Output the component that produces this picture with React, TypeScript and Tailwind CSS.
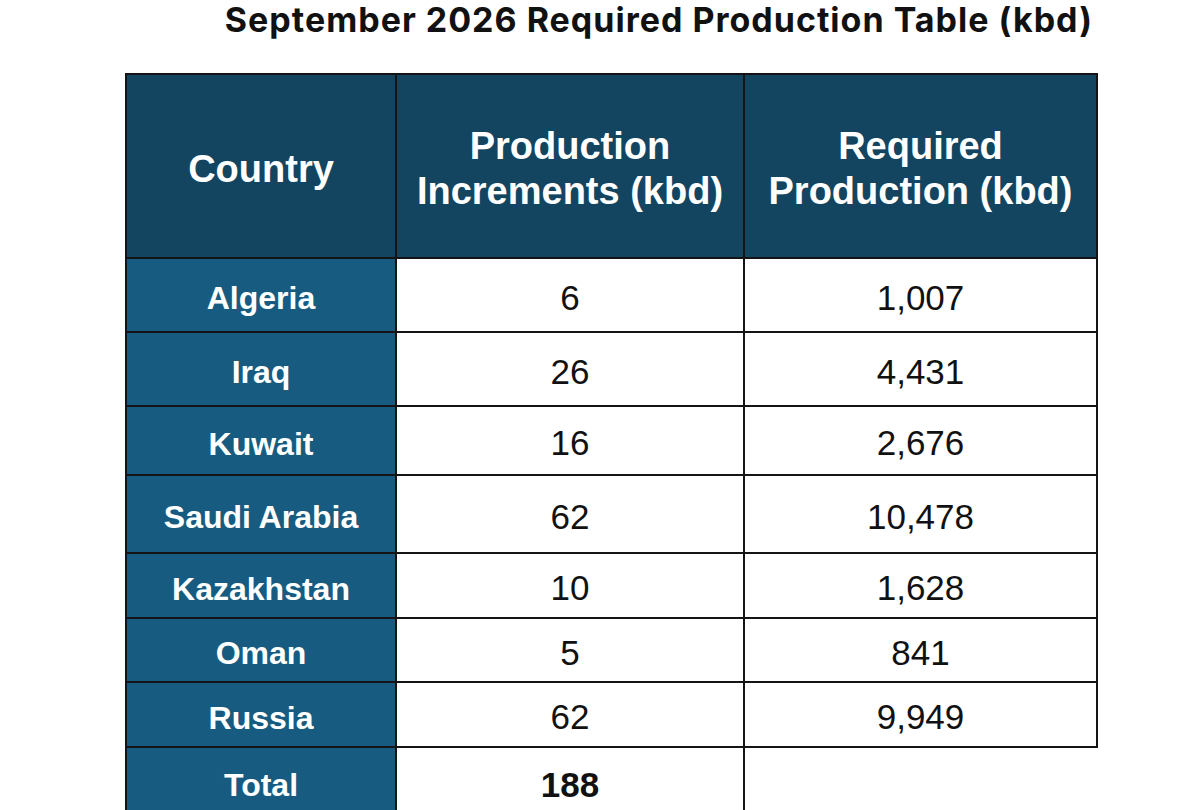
import React from 'react';

const rows = [
  { country: 'Algeria', inc: '6', req: '1,007', h: 'h-[74px]' },
  { country: 'Iraq', inc: '26', req: '4,431', h: 'h-[74px]' },
  { country: 'Kuwait', inc: '16', req: '2,676', h: 'h-[69px]' },
  { country: 'Saudi Arabia', inc: '62', req: '10,478', h: 'h-[78px]' },
  { country: 'Kazakhstan', inc: '10', req: '1,628', h: 'h-[65px]' },
  { country: 'Oman', inc: '5', req: '841', h: 'h-[64px]' },
  { country: 'Russia', inc: '62', req: '9,949', h: 'h-[65px]' },
];

const cell = 'border-2 border-[#141414] text-center align-middle p-0 pt-[6px]';

export default function App() {
  return (
    <div className="min-h-screen w-[1200px] bg-white overflow-hidden">
      <div className="ml-[125px] w-[971px]">
        <h1
          className="text-right pr-[3px] text-[34px] leading-[40px] font-bold tracking-[1px] text-[#111] whitespace-nowrap"
          style={{ fontFamily: 'Inter, "Open Sans", sans-serif' }}
        >
          September 2026 Required Production Table (kbd)
        </h1>
        <table
          className="mt-[33px] border-collapse table-fixed w-[971px]"
          style={{ fontFamily: '"Liberation Sans", Arial, sans-serif' }}
        >
          <colgroup>
            <col className="w-[270px]" />
            <col className="w-[348px]" />
            <col className="w-[353px]" />
          </colgroup>
          <thead>
            <tr className="h-[184px] bg-[#134561] text-white font-bold text-[38px] leading-[45px]">
              <th className={cell}>Country</th>
              <th className={cell}>
                Production
                <br />
                Increments (kbd)
              </th>
              <th className={cell}>
                Required
                <br />
                Production (kbd)
              </th>
            </tr>
          </thead>
          <tbody>
            {rows.map((r) => (
              <tr key={r.country} className={r.h}>
                <td className={`${cell} bg-[#175c80] text-white font-bold text-[32px]`}>{r.country}</td>
                <td className={`${cell} text-[35px] text-[#111]`}>{r.inc}</td>
                <td className={`${cell} text-[35px] text-[#111]`}>{r.req}</td>
              </tr>
            ))}
            <tr className="h-[70px]">
              <td className={`${cell} bg-[#175c80] text-white font-bold text-[32px]`}>Total</td>
              <td className={`${cell} text-[35px] font-bold text-[#111]`}>188</td>
              <td className="border-t-2 border-[#141414]"></td>
            </tr>
          </tbody>
        </table>
      </div>
    </div>
  );
}
